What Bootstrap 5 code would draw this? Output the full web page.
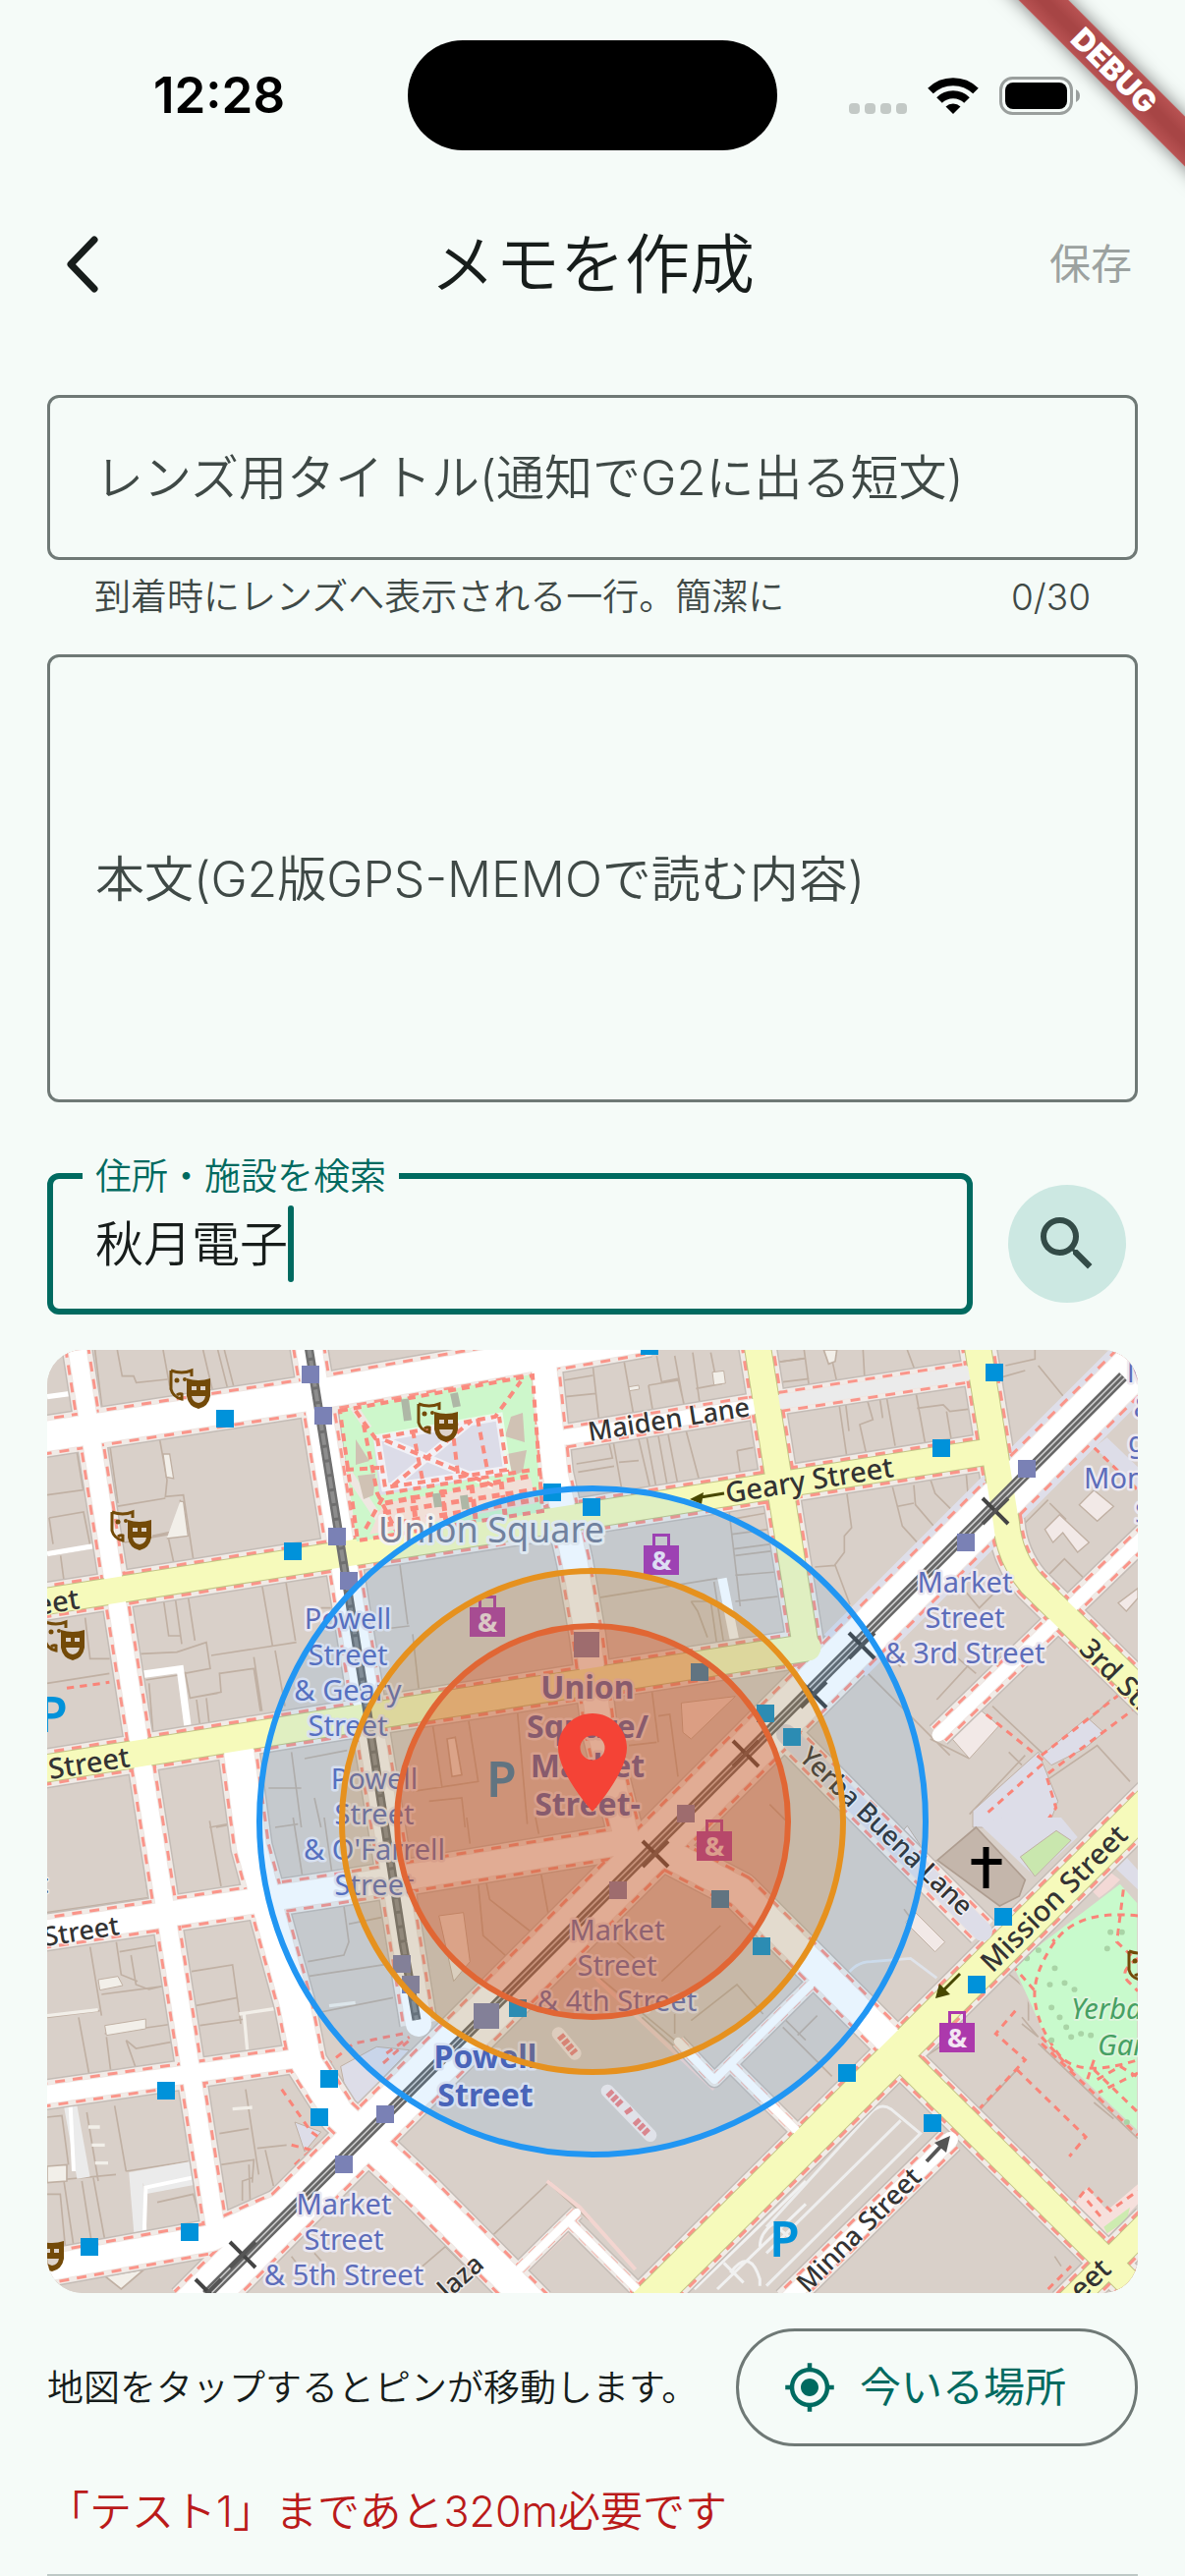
<!DOCTYPE html>
<html lang="ja">
<head>
<meta charset="utf-8">
<meta name="viewport" content="width=device-width, initial-scale=1">
<title>メモを作成</title>
<link href="https://cdn.jsdelivr.net/npm/bootstrap@5.3.0/dist/css/bootstrap.min.css" rel="stylesheet">
<style>
:root{--ink:#171d1b;--sub:#3f4946;--line:#6f7976;--teal:#006a60;--paper:#f5fbf8}
body{background:var(--paper);color:var(--ink);font-family:Inter,"Noto Sans CJK JP",sans-serif;font-weight:350;overflow-x:hidden}
.screen{position:relative;overflow:hidden}
.statusbar{display:grid;grid-template-columns:1fr 376px 1fr;height:194px;padding:0 106px;color:#000}
.clock{font-size:51px;font-weight:600;line-height:60px;padding-left:50px}
.island{height:112px;border-radius:56px;background:#000}
.ribbon{position:absolute;top:54px;right:-128px;width:400px;height:36px;line-height:36px;transform:rotate(45deg);background:linear-gradient(#b95353,#a74545 40%,#a74545 60%,#b95353);color:#fff;font-size:31px;font-weight:900;text-align:center;box-shadow:0 0 18px rgba(0,0,0,.5)}
.appbar{height:150px;padding:0 54px}
.appbar h1{font-size:66px;line-height:80px;font-weight:350;margin:0}
.appbar .side{width:120px}
.btn-plain{border:0;background:none;padding:0}
.btn-save{font-size:42px;line-height:60px;color:#9ca2a0;font-weight:400}
main{padding:58px 48px 0}
.field{border:3px solid var(--line);border-radius:12px;background:transparent;color:var(--ink);font-size:49px;line-height:72px;font-weight:350;padding:0 46px;width:100%;display:block;resize:none;outline:0}
.field::placeholder{color:var(--sub);opacity:1}
.field-title{height:168px}
.field-body{height:456px;padding-top:190px;font-size:50px}
.hint{font-size:37px;line-height:48px;color:var(--sub);padding:14px 48px 0;height:96px}
.search-row{margin-top:72px;gap:36px;padding-right:12px}
.field-search{height:144px;border:6px solid var(--teal);padding:0 43px 8px}
.float-tag{position:absolute;left:36px;top:-20px;padding:0 13px;background:var(--paper);color:var(--teal);font-size:37px;line-height:48px}
.caret{position:absolute;left:245px;top:33px;width:6px;height:78px;border-radius:3px;background:var(--teal)}
.btn-search{width:120px;height:120px;border-radius:50%;border:0;background:#cce8e2;flex:none}
.mapbox{margin-top:36px;border-radius:36px;overflow:hidden;background:#d9d0c9}
.mapbox svg{display:block;width:100%;height:auto}
.after-map{margin-top:36px}
.tip{font-size:37px;line-height:48px;padding-top:2px}
.btn-here{height:120px;border:3px solid var(--line);border-radius:60px;background:none;color:var(--teal);font-size:42px;line-height:60px;font-weight:400;padding:0 70px 0 45px;gap:24px}
.warn{font-size:43px;line-height:60px;color:#ba1a1a;margin:36px 0 34px}
.rule{height:2px;background:#bec9c6}
.mapbox text{font-family:"Noto Sans",sans-serif;font-weight:400;paint-order:stroke;stroke-linejoin:round}
.mapbox .st{fill:#333;font-size:27px;font-weight:500;stroke:rgba(255,255,255,.6);stroke-width:3px}
.mapbox .st.big{font-size:29px;stroke:#f7fabf}
.stop{fill:#5d6dba;font-size:29px;text-anchor:middle;stroke:#ece9f0;stroke-width:5px}
.mapbox .hub{font-weight:700;font-size:32px;fill:#4e5fb3}
.sq{fill:#7a7f95;font-size:36px;text-anchor:middle;stroke:#f4f2f0;stroke-width:6px}
.mapbox .park{fill:#46a063;font-size:29px;font-style:italic;stroke:#ddf5dc;stroke-width:4px}
.mapbox .pk{fill:#0092da;font-size:50px;font-weight:600}
.mapbox .amp{font-size:27px;font-weight:700;fill:#f3e6f3;text-anchor:middle}
.edge{fill:none;stroke:#c0b0a3;stroke-width:5}
.walk{fill:none;stroke:#fa8478;stroke-width:9;stroke-dasharray:22 18}
</style>
<script src="https://cdn.jsdelivr.net/npm/bootstrap@5.3.0/dist/js/bootstrap.bundle.min.js"></script>
</head>
<body>
<div class="screen">
<header>
  <div class="statusbar align-items-center">
    <div class="clock">12:28</div>
    <div class="island"></div>
    <div class="d-flex justify-content-end">
      <svg width="236" height="44" viewBox="0 0 236 44" aria-hidden="true">
        <g fill="#c3c9c6"><rect x="0" y="30" width="11" height="11" rx="4"/><rect x="16" y="30" width="11" height="11" rx="4"/><rect x="32" y="30" width="11" height="11" rx="4"/><rect x="48" y="30" width="11" height="11" rx="4"/></g>
        <g fill="none" stroke="#000" stroke-width="8"><path d="M83 17.500a33 33 0 0 1 46 0"/><path d="M92 27a20 20 0 0 1 28 0"/></g>
        <path d="M98.500 33.500a11 11 0 0 1 15 0L106 41z"/>
        <rect x="154.500" y="4.500" width="72" height="36" rx="12" fill="none" stroke="#9a9f9d" stroke-width="3"/>
        <rect x="159" y="9" width="63" height="27" rx="8"/>
        <path d="M231 16q4 2 4 6.500t-4 6.500z" fill="#9a9f9d"/>
      </svg>
    </div>
  </div>
  <div class="appbar d-flex align-items-center justify-content-between">
    <div class="side"><button class="btn-plain d-flex" type="button" aria-label="戻る"><svg width="56" height="72" viewBox="0 0 56 72"><path d="M42 11 18 36 42 61" fill="none" stroke="#171d1b" stroke-width="7" stroke-linecap="round" stroke-linejoin="round"/></svg></button></div>
    <h1>メモを作成</h1>
    <div class="side text-end"><button class="btn-plain btn-save" type="button">保存</button></div>
  </div>
</header>
<div class="ribbon">DEBUG</div>
<main>
  <label class="visually-hidden" for="lens">レンズ用タイトル</label>
  <input class="field field-title" id="lens" type="text" maxlength="30" placeholder="レンズ用タイトル(通知でG2に出る短文)">
  <div class="hint d-flex justify-content-between"><span>到着時にレンズへ表示される一行。簡潔に</span><span>0/30</span></div>
  <label class="visually-hidden" for="memo">本文</label>
  <textarea class="field field-body" id="memo" placeholder="本文(G2版GPS-MEMOで読む内容)"></textarea>
  <div class="search-row d-flex align-items-center">
    <div class="position-relative flex-grow-1">
      <input class="field field-search" id="place" type="text" value="秋月電子">
      <label class="float-tag" for="place">住所・施設を検索</label>
      <span class="caret"></span>
    </div>
    <button class="btn-search d-flex align-items-center justify-content-center" type="button" aria-label="検索"><svg width="72" height="72" viewBox="0 0 24 24" fill="#334b47"><path d="M15.500 14h-.79l-.28-.27A6.470 6.470 0 0 0 16 9.500 6.500 6.500 0 1 0 9.500 16c1.610 0 3.090-.59 4.230-1.570l.27.28v.79l5 4.990L20.490 19l-4.990-5zm-6 0C7.010 14 5 11.990 5 9.500S7.010 5 9.500 5 14 7.010 14 9.500 11.990 14 9.500 14z"/></svg></button>
  </div>
  <div class="mapbox">
  <svg viewBox="48 1374 1110 960" role="img" aria-label="地図">
    <defs>
      <g id="mask"><path d="M2 3v19q2 8 11 10V27q-3-1-5 1M2 3q11 4 21 0v6" fill="none" stroke="#734a08" stroke-width="3"/><circle cx="8" cy="13" r="2.500" fill="#734a08"/><circle cx="16" cy="12" r="2" fill="#734a08"/><path d="M18 11q12 4 24 0v18q-2 11-12 13-10-2-12-13z" fill="#734a08"/><path d="M23 19h5v4h-5zM32 19h5v4h-5zM23 29h14q-1 6-7 7-6-1-7-7z" fill="#ddd3ca"/></g>
      <g id="bag"><path d="M0 12h36v30H0z" fill="#ac39ac"/><path d="M10.500 13V1.500h15V13" fill="none" stroke="#ac39ac" stroke-width="3"/><text class="amp" x="18" y="37">&amp;</text></g>
    </defs>
    <rect x="48" y="1374" width="1110" height="960" fill="#d9d0c9"/>
    <!-- building outlines, one group for each map tile -->
    <g transform="translate(40 1370) scale(.33333)" class="edge">
      <path d="M238 12l15 80 35 0 8 20 95-10M378 12l20 110M500 12l28 120M545 12l30 118M565 12l28 110M170 12l22 180M365 270l25 140-5 50 55-5 30 195M385 465L235 490M345 580l95-20-10-90M215 300l145-30M215 300l25 180M260 600l190-35M395 590l15 70M24 330l90-10 20 120-110 15M30 525l105-18 20 100M30 525l12 80M65 640l10 75M24 640l150-25M380 780l15 105 35 0M415 770l20 140M455 770l20 130M680 730l32 185M752 715l30 185M310 940l110-5 90-30 12 80-80 15M525 945l260-40M445 995l15 80 85-15M550 1000l105-15 20 130M655 950l25 165M480 1080l12 90M510 1075l10 90M460 1075l95-18-5-60M325 1020l100-15M335 1030l12 150M1100 660l25 190M1000 870l130-15M140 830l15 125 60 0M24 1030l190-30M24 1330l150-25M380 1290l210-35 20 210M770 1240l30 230M810 1260l130-25M520 1470l80-15M700 1350l100 0M720 1470l70-10M860 800l30 0M720 930l30 170M840 1380l20 90"/>
      <path d="M378 330l20 0 12 75-22-5zM430 475l10 0 14 105-65 8" fill="#f2efe9" stroke-width="4"/><path d="M24 635l165-28M24 155l90-12" stroke="#fff" stroke-width="16"/><path d="M300 1005l130-18 25 190" stroke="#fff" stroke-width="22"/><path d="M84 1045l130-18" class="walk"/>
    </g>
    <g transform="translate(420 1370) scale(.33333)" class="edge">
      <path d="M550 60l20 180M645 45l32 180M745 30l15 80 50-10 25 105M800 30l30 160M855 20l22 160M460 105l90-15M465 155l95-10M720 120l15 90M720 120l90-15M865 130l80-15M910 20l12 60M500 360l110-18-10-45M505 385l110-18M612 290l25 140M630 355l60-5M690 285l35 150M715 280l30 160M750 275l28 155M780 270l28 145M835 260l40 150M990 320l10 70M990 320l50-10M1110 50l90-12M965 495l35 300M970 530l110-20M975 575l110-15M980 620l115-15M985 700l125-10M985 780l130-15M985 640l120-15M560 770l370-60M850 780l60 0 20 140M920 720l30 190M850 780l20 30 30 80M0 880l20 180M320 1120l30 340M170 1140l30 190-200 30M60 1150l30 200M730 1050l20 160M750 1130l35-5 25 190M660 1220l85-10M50 1390l100-10 10 90M1150 1250l50 60M1090 1400l60 60"/>
      <path d="M820 1090l165-20-135 130-25-20z" fill="#f2e6e0" stroke-width="3"/><path d="M105 1200l25-5 20 115-30 5z" fill="#f2efe9"/><path d="M915 80l35-4 5 38-35 5zM660 125l30-5 2 12-30 5z" fill="#f2efe9" stroke-width="3"/><path d="M945 710l40 200" stroke="#fff" stroke-width="28"/>
    </g>
    <g transform="translate(780 1370) scale(.33333)" class="edge">
      <path d="M115 12l15 110M200 40l15 70M295 12l5 90M430 12l30 80M30 50l85-12M50 110l80-10M220 165l25 170M240 160l12 100M305 155l20 70-40 15 20 90M345 150l10 70M365 145l28 160M455 135l30 165M460 190l80-10 20 20 80-10M550 200l15 90M245 445l15 110-22 25 0 50-30 40-60 5M210 670l45 120M385 430l15 60 50-10M450 425l5 60 60 70M500 405l15 45 50 50M610 390l5 60M400 490l15 60 50 55M730 60l90-20 0-30M830 60l90 110M720 95l70-20M310 1000l250 250M410 980l-90-90M520 1080l120-130M865 480l50 50M790 540l70-70M860 700l50-50 60 60M500 1200l120 60M690 1100l170 160 190-180M850 1330l160-110 100 110M620 1430l170-180M600 740l50 60 60-60M580 950l60 50M780 1280l-40-40"/>
      <path d="M1000 440l60 50-50 45-55-50zM850 560l45-45 90 85-35 30-45-60-30 30zM1134 740l0 30-35 40-25-25z" fill="#f2e9e7" stroke-width="4"/><path d="M175 12h40l-5 35-20 8z" fill="#f2efe9"/><path d="M550 1180l90-80 70 60-90 100z" fill="#f2e9e7" stroke-width="3"/>
      <path d="M1000 310l40-30 94 90 0 60z" fill="#dddde8" stroke="none"/>
      <path d="M630 1420l200-180 60 150-30 80-230 0z" fill="#dddde8" stroke-width="3"/><path d="M980 1135l50 45-60 50-100 50-30-30z" fill="#dddde8" stroke-width="3"/>
      <path class="walk" d="M640 1100l210 170-180 160M840 1250l294-230M1134 1100l-280 210 30 100-40 60M770 480l30 20M1000 310l134 130"/>
    </g>
    <g transform="translate(40 1850) scale(.33333)" class="edge">
      <path d="M300 0l35 260M520 10l35 200M585 0l30 210M540 30l50-10M24 290l310-45M155 395l35 210M235 380l15 100 50 20M245 410l115-20M280 420l15 90 40 15 40-10M24 610l160-20M190 540l190-25M200 660l210-30M120 610l35 190M205 670l15 120M265 680l30 25 110-20M265 680l35 100M465 470l125-20 25 180M475 575l130-25M490 635l140-20M775 0l30 190M870 0l25 180M930 270l15 110-15 40-110 20M820 485l260-40M945 325l100-20M830 600l250-50M630 830l40 260M550 965l90-15M665 1010l90-10M690 1015l25 110M555 1060l100-15-5 70M640 1060l5 150M230 880l35 200M145 900l35 210M24 915l45-5 20 150M265 1080l190-30M165 1100l35 190M75 1110l30 200M130 1110l30 190M24 1150l40 0 15 160M360 1175l110-25 25 90M650 1100l-30 10 0 60M24 1110l210-20M770 1340l60 80M840 1330l70 80"/>
      <path d="M180 495l60-10 15 28-70 14zM200 635l125-20 0 30-120 20z" fill="#f2efe9" stroke-width="3"/><path d="M200 1400l120-20-70 60z" fill="#f2efe9"/><path d="M24 1065l60-5 0 50-60 5z" fill="#f2efe9"/>
      <path d="M24 605l155-18M590 890l60-5M610 600l120-18M625 600l10 110M885 575l80-10M150 945l35 0M160 1000l40 0M170 1055l40 0" stroke="#f2efe9" stroke-width="10"/>
      <path d="M95 880l40 220M465 1070l-170 30 15 180M320 1130l160-30" stroke="#ebebeb" stroke-width="40"/><path d="M95 880l10 200M465 1100l-140 30-5 150" stroke="#fff" stroke-width="12"/>
      <path d="M920 760l110-60 100 10-160 170-40-70z" fill="#dddde8" stroke-width="3"/><path d="M780 930l80 30-50 60z" fill="#dddde8" stroke-width="3"/>
      <path class="walk" d="M845 670l15 100 100-80 150-30M890 780l80 110M1060 720l70-50M1050 750l80-70M740 830l90 130 60 40M770 1000l80 20M780 1060l80-70"/>
    </g>
    <g transform="translate(420 1850) scale(.33333)" class="edge">
      <path d="M165 0l10 80M375 0l10 50M200 200l15 160 100 90M225 200l10 50 140 110M390 160l25 140M600 360l100 90M760 500l180-170M850 620l140-110 80 90M800 600l0 60M240 1280l180-170M420 1120l120 110M700 610l200 180M560 480l240 200M1130 610l70 70M30 1370l70-60 60 60"/>
      <path d="M80 300l75-10 20 150-50 60z" fill="#f2efe9" stroke-width="3"/>
      <path d="M860 1440L1200 1110M1200 1180L930 1440M950 1360l60 60M1060 1310q0-40 40-70l60 50M970 1390q60-80 90 20v20" stroke="#f1f1f1" stroke-width="9"/>
      <path d="M410 1110l100 80 170 190M510 1230l-200 190M560 490l360 340" stroke="#f3d5d0" stroke-width="12"/>
      <path d="M445 660l50 60M595 835l130 135" stroke="#f6ebe8" stroke-width="40" stroke-linecap="round"/><path d="M450 665l45 55M598 838l40 42M655 890l10 14M680 925l38 40" stroke="#ef8684" stroke-width="24" stroke-dasharray="14 6"/>
    </g>
    <g transform="translate(780 1850) scale(.33333)" class="edge">
      <path d="M640 30l150 160-18 50-60 30-190-140z" fill="#c4b6ab" stroke="#ae9d90"/>
      <path d="M50 640l150 150M95 665l60-60M520 130l-30 40M470 740l90-60M720 460l80 70 0 90M645 900l120-130M780 610l50 60-50-40M880 1340l20 30M240 490l100 110M830 690l304 290M1000 870l60 50M420 280l90 120"/>
      <path d="M455 290l90 90-30 30-90-90zM400 60l30-35 40 60 0 70z" fill="#f2e9e7" stroke-width="3"/><path d="M240 490q30-50 80-50l120-10 80 60" stroke="#dfe3ea" stroke-width="8"/>
      <path d="M0 1250L320 900q30-30 60-10l90 75L0 1430M0 1330L410 925" stroke="#eee" stroke-width="9"/>
      <path d="M650 20l80-20 170 0 50 60-130 120z" fill="#dddde8" stroke="none"/><path d="M775 120l110-80 45 30-110 110z" fill="#c9e7ae" stroke-width="3"/>
      <path d="M1040 130l40-30 54 60 0 60z" fill="#dddde8" stroke="none"/><path d="M980 210l60-50 40 30-60 60z" fill="#f3d9d6" stroke="none"/>
      <path d="M750 450L1080 200l54 60V960L860 700l-50-120z" fill="#c8facc" stroke="#d9d0c9"/>
      <path class="walk" d="M1134 300Q950 280 880 380T820 560t70 160 244 20M750 450l70 80M1090 220l-20 160 64 60M840 690l294 280M1000 770l134 130M1134 780l-120 60M1010 800l70-40 50 30M850 340l30 40M1000 740l-20 60M840 670l100 110M1134 430q-60 40-30 70l30 30"/>
      <path class="walk" d="M760 590l-60 70 90 80-150 160M765 770l210 205-50 60" stroke="#fa8478"/>
      <path d="M930 1190l50-60 60 70 94-80 0 60-110 120z" fill="#f6e0dc" stroke="none"/><path d="M950 1190l50 50-15 15-45-50zM1030 1250l80-60-10 40-60 40z" fill="#cdebb0" stroke="none"/>
      <path class="walk" d="M930 1190l50-60 70 70 84-60M980 1170l50 60M920 1200l110 110M860 1440l70-70"/>
      <path d="M865 510h1M910 505h1M940 525h1M880 460h1M895 610h1M915 640h1M960 660h1M990 665h1M870 680h1M930 670h1M1050 350h1M1085 350h1M1040 400h1M795 430h1M830 405h1M870 580h1M1100 930h1" stroke="#a9d4a6" stroke-width="17" stroke-linecap="round"/>
    </g>
    <g id="roads"></g>
    <!-- Union Square -->
    <path d="M345 1435l196-36 10 140-188 30z" fill="#cdf7cb"/>
    <path d="M360 1432l15 22M355 1500l40 60" stroke="#efe7e2" stroke-width="8"/>
    <path d="M380 1462l128-22 8 60-130 22z" fill="#dcdce8"/><path d="M362 1465l14 22-14 4zM364 1502l18-2-2 22-10 4z" fill="#d0c2b4"/><path d="M520 1442l12-4 2 30-20-6zM516 1480l20-4-4 22-10 4z" fill="#d0c2b4"/>
    <path d="M390 1530l150-26 6 26-170 32z" fill="#f1dfd7"/>
    <g fill="none" stroke="#fff" stroke-opacity=".6" stroke-width="8"><path d="M384 1464l8 50 124-18-8-54zM392 1466l110 46M400 1512l80-66"/></g>
    <g fill="none" stroke="#fa8a7e" stroke-width="4" stroke-dasharray="8 6"><path d="M346 1436l196-36 10 138-188 30zM362 1436l20 28 122-22 26-36M352 1496l34-2M384 1464l8 50 124-18-8-54M372 1556l20-36 150-24M392 1466l110 46M400 1512l80-66M370 1450l14 70 20 40M420 1456l10 50M460 1450l6 50M486 1444l10 52"/><path d="M392 1530l150-28M390 1540l156-24M392 1552l156-26M420 1522l4 34M450 1516l4 34M480 1512l4 34M510 1508l4 34" stroke-width="5"/></g>
    <g stroke="#aeb7a6" stroke-width="8"><path d="M412 1424l3 22M462 1418l3 14M444 1520l2 14M472 1522l2 14"/></g>
    <g id="rails"></g>
    <g id="marks"></g>
    <g fill="none" stroke-width="3"><path d="M737 1520l-24 4" stroke="#474700"/><path d="M702 1526l14-7-2 12z" fill="#474700"/><path d="M977 2009l-18 18" stroke="#474700"/><path d="M952 2034l4-15 11 11z" fill="#474700"/><path d="M943 2200l15-16" stroke="#555" stroke-width="4"/><path d="M967 2174l-4 17-12-10z" fill="#555"/></g>
    <path d="M1000.500 1880h6v12h13v6h-13v24h-6v-24h-12v-6h12z"/>
    <use href="#mask" x="172" y="1392"/><use href="#mask" x="112" y="1536"/><use href="#mask" x="44" y="1648"/><use href="#mask" x="424" y="1426"/><use href="#mask" x="23" y="2270"/><use href="#mask" x="1147" y="1983"/>
    <use href="#bag" x="655" y="1561"/><use href="#bag" x="478" y="1624"/><use href="#bag" x="709" y="1852"/><use href="#bag" x="956" y="2047"/>
    <text class="pk" x="495" y="1829">P</text><text class="pk" x="783" y="2297">P</text><text class="pk" x="38" y="1763">P</text>
    <text class="st" transform="translate(600 1467) rotate(-9)">Maiden Lane</text>
    <text class="st big" transform="translate(740 1530) rotate(-9)">Geary Street</text>
    <text class="st big" transform="translate(51 1811) rotate(-9)">Street</text>
    <text class="st big" transform="translate(38 1644) rotate(-9)">eet</text>
    <text class="st" transform="translate(46 1981) rotate(-9)">Street</text>
    <text class="st" x="39" y="1927">t</text>
    <text class="st big" transform="translate(1097 1680) rotate(45)">3rd Street</text>
    <text class="st" transform="translate(812 1790) rotate(44)">Yerba Buena Lane</text>
    <text class="st big" transform="translate(1010 2009) rotate(-45)">Mission Street</text>
    <text class="st" transform="translate(822 2335) rotate(-45)">Minna Street</text>
    <text class="st" transform="translate(456 2341) rotate(-42)">laza</text>
    <text class="st big" transform="translate(1100 2342) rotate(-43)">eet</text>
    <text class="park" x="1090" y="2055">Yerba</text><text class="park" x="1117" y="2092">Gardens</text>
    <text class="sq" x="500" y="1570">Union Square</text>
    <text class="stop"><tspan x="354" y="1658">Powell</tspan><tspan x="354" y="1695">Street</tspan><tspan x="354" y="1731">&amp; Geary</tspan><tspan x="354" y="1767">Street</tspan></text>
    <text class="stop"><tspan x="381" y="1821">Powell</tspan><tspan x="381" y="1857">Street</tspan><tspan x="381" y="1893">&amp; O'Farrell</tspan><tspan x="381" y="1929">Street</tspan></text>
    <text class="stop"><tspan x="982" y="1621">Market</tspan><tspan x="982" y="1657">Street</tspan><tspan x="982" y="1693">&amp; 3rd Street</tspan></text>
    <text class="stop"><tspan x="628" y="1975">Market</tspan><tspan x="628" y="2011">Street</tspan><tspan x="628" y="2047">&amp; 4th Street</tspan></text>
    <text class="stop"><tspan x="350" y="2254">Market</tspan><tspan x="350" y="2290">Street</tspan><tspan x="350" y="2326">&amp; 5th Street</tspan></text>
    <text class="stop"><tspan x="1160" y="1407">M</tspan><tspan x="1164" y="1443">&amp;</tspan><tspan x="1157" y="1478">g</tspan><tspan x="1134" y="1515">Mon</tspan><tspan x="1163" y="1550">S</tspan></text>
    <text class="stop hub"><tspan x="598" y="1729">Union</tspan><tspan x="598" y="1769">Square/</tspan><tspan x="598" y="1809">Market</tspan><tspan x="598" y="1848">Street-</tspan></text>
    <text class="stop hub"><tspan x="494" y="2105">Powell</tspan><tspan x="494" y="2144">Street</tspan></text>
    <g stroke-width="6"><circle cx="603" cy="1854" r="339" fill="#2196f3" fill-opacity=".1" stroke="#2196f3"/><circle cx="603" cy="1854" r="255" fill="#d1790d" fill-opacity=".2" stroke="#e6911e"/><circle cx="603" cy="1854" r="199" fill="#dd3e0c" fill-opacity=".3" stroke="#e16634"/></g>
    <path transform="translate(543 1734) scale(5)" fill="#f44336" d="M12 2C8.130 2 5 5.130 5 9c0 5.250 7 13 7 13s7-7.750 7-13c0-3.870-3.130-7-7-7zm0 9.500a2.500 2.500 0 0 1 0-5 2.500 2.500 0 0 1 0 5z"/>
  </svg>
  </div>
  <div class="after-map d-flex align-items-center justify-content-between">
    <span class="tip">地図をタップするとピンが移動します。</span>
    <button class="btn-here d-flex align-items-center" type="button"><svg width="54" height="54" viewBox="0 0 24 24" fill="#006a60"><path d="M12 8c-2.210 0-4 1.790-4 4s1.790 4 4 4 4-1.790 4-4-1.790-4-4-4zm8.940 3A8.994 8.994 0 0 0 13 3.060V1h-2v2.060A8.994 8.994 0 0 0 3.060 11H1v2h2.060A8.994 8.994 0 0 0 11 20.940V23h2v-2.060A8.994 8.994 0 0 0 20.940 13H23v-2h-2.060zM12 19c-3.870 0-7-3.130-7-7s3.130-7 7-7 7 3.130 7 7-3.130 7-7 7z"/></svg><span>今いる場所</span></button>
  </div>
  <p class="warn">「テスト1」まであと320m必要です</p>
  <div class="rule"></div>
</main>
</div>
<script>
// Each road: path, width, fill
const W = '#fff', Y = '#f6fabb';
const roads = [
  ['M40 1463L307 1422 420 1402 660 1360', 30, W],
  ['M78 1370L220 2272', 18, W],
  ['M314 1370L426 2060', 26, W],
  ['M40 1968L345 1922 640 1874', 25, W],
  ['M40 2133L310 2094', 18, W],
  ['M242 1775L256 1880 300 2040 312 2100 345 2152 430 2232 545 2348', 30, W],
  ['M553 1385L565 1500 585 1590 598 1665 610 1760 640 1880', 25, W],
  ['M575 1463L770 1431', 15, W],
  ['M40 2310L215 2278 300 2240', 26, W],
  ['M667 1880L753 1925 920 2092', 28, W],
  ['M1170 1558L955 1766', 13, W],
  ['M690 2078L727 2117 825 2020M745 2103L812 2170', 8, W],
  ['M587 2252L520 2318M580 2262L652 2334', 8, W],
  ['M967 2178L800 2342', 16, W],
  ['M1180 1365L195 2350', 44, W],
  ['M793 1427L995 1396', 14, '#ebebeb'],
  ['M800 1765L1000 1966', 20, '#dddde8'],
  ['M40 1631L1010 1477', 26, Y],
  ['M40 1801L420 1740 822 1677', 27, Y],
  ['M770 1365L820 1676', 26, Y],
  ['M994 1365L1010 1463 1024 1550Q1027 1585 1050 1612L1175 1735', 26, Y],
  ['M1180 1825L655 2347', 33, Y],
  ['M915 2092L1150 2325M1170 2262L1085 2347', 26, Y]
];
const path = (d, w, c, extra = '') => `<path d="${d}" stroke="${c}" stroke-width="${w}" ${extra}/>`;
const small = w => w < 12 ? 5 : 0;
document.getElementById('roads').innerHTML = '<g fill="none" stroke-linejoin="round">' +
  roads.map(r => path(r[0], r[1] + 14 - small(r[1]), '#c4bcb6')).join('') +
  roads.map(r => path(r[0], r[1] + 11 - small(r[1]), '#f1ebe7')).join('') +
  path('M1170 1375L860 1685', 60, '#dedee9') +
  roads.map(r => path(r[0], r[1] + 8 - small(r[1]), '#fa958a', 'stroke-dasharray="10 8"')).join('') +
  roads.map(r => path(r[0], r[1] + 2, r[2] === Y ? '#c3c486' : '#efe6e2')).join('') +
  roads.map(r => path(r[0], r[1], r[2], 'stroke-linecap="round"')).join('') + '</g>';

// Tram tracks
const tram = (d, w) => path(d, w, '#6f6f6f') + path(d, w - 5, '#8d8d8d', 'stroke-dasharray="12 3"');
let rails = '<g fill="none">' + tram('M314 1370L373 1737 410 1977 424 2056', 9) +
  path('M1143 1401L210 2336', 11, '#666') + path('M1143 1401L210 2336', 6, '#cfcfcf') + path('M1143 1401L210 2336', 3, '#666');
for (const [x, y] of [[1013,1538],[877,1675],[828,1725],[759,1785],[667,1887],[247,2295],[212,2333]])
  rails += path(`M${x-13} ${y-13}L${x+13} ${y+13}`, 4, '#444') + path(`M${x-13} ${y+13}L${x+13} ${y-13}`, 4, '#555');
document.getElementById('rails').innerHTML = rails + '</g>';

// Bus stops, tram stops and station entrances
const box = (x, y, s, c) => `<rect x="${x - s / 2}" y="${y - s / 2}" width="${s}" height="${s}" fill="${c}"/>`;
const bus = [[229,1444],[298,1579],[562,1519],[602,1534],[661,1370],[712,1702],[779,1744],[806,1768],[1012,1397],[958,1474],[169,2128],[335,2116],[325,2155],[193,2272],[91,2287],[733,1933],[775,1981],[527,2044],[1021,1951],[994,2020],[862,2110],[949,2161]];
const stops = [[316,1399],[329,1441],[343,1564],[355,1609],[1045,1495],[983,1570],[698,1846],[629,1924],[392,2152],[350,2203],[409,1999],[418,2020]];
document.getElementById('marks').innerHTML =
  bus.map(p => box(...p, 18, '#0092da')).join('') +
  stops.map(p => box(...p, 18, '#7a81b5')).join('') +
  box(597, 1674, 26, '#7a81b5') + box(495, 2052, 26, '#7a81b5');
</script>
</body>
</html>
